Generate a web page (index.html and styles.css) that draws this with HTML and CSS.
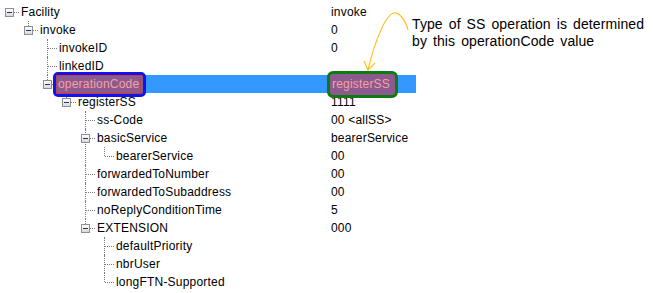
FILE: index.html
```html
<!DOCTYPE html>
<html lang="en">

<head>
    <meta charset="UTF-8">
    <meta name="viewport" content="width=device-width, initial-scale=1.0">
    <title>SS operation decode</title>
    <link rel="stylesheet" href="styles.css">
</head>

<body>
    <div class="view">
        <ul class="tree">
            <li>
                <div class="row"><span class="twig"><i class="box"></i></span><span class="label">Facility</span><span class="value">invoke</span></div>
                <ul>
                    <li>
                        <div class="row"><span class="twig"><i class="box"></i></span><span class="label">invoke</span><span class="value">0</span></div>
                        <ul>
                            <li><div class="row"><span class="twig"></span><span class="label">invokeID</span><span class="value">0</span></div></li>
                            <li><div class="row"><span class="twig"></span><span class="label">linkedID</span><span class="value"></span></div></li>
                            <li>
                                <div class="row selected"><span class="twig"><i class="box"></i></span><span class="label"><span class="mark blue"><span class="focus">operationCode</span></span></span><span class="value"><span class="mark green">registerSS</span></span></div>
                                <ul>
                                    <li>
                                        <div class="row"><span class="twig"><i class="box"></i></span><span class="label">registerSS</span><span class="value">1111</span></div>
                                        <ul>
                                            <li><div class="row"><span class="twig"></span><span class="label">ss-Code</span><span class="value">00 &lt;allSS&gt;</span></div></li>
                                            <li>
                                                <div class="row"><span class="twig"><i class="box"></i></span><span class="label">basicService</span><span class="value">bearerService</span></div>
                                                <ul>
                                                    <li><div class="row"><span class="twig"></span><span class="label">bearerService</span><span class="value">00</span></div></li>
                                                </ul>
                                            </li>
                                            <li><div class="row"><span class="twig"></span><span class="label">forwardedToNumber</span><span class="value">00</span></div></li>
                                            <li><div class="row"><span class="twig"></span><span class="label">forwardedToSubaddress</span><span class="value">00</span></div></li>
                                            <li><div class="row"><span class="twig"></span><span class="label">noReplyConditionTime</span><span class="value">5</span></div></li>
                                            <li>
                                                <div class="row"><span class="twig"><i class="box"></i></span><span class="label">EXTENSION</span><span class="value">000</span></div>
                                                <ul>
                                                    <li><div class="row"><span class="twig"></span><span class="label">defaultPriority</span><span class="value"></span></div></li>
                                                    <li><div class="row"><span class="twig"></span><span class="label">nbrUser</span><span class="value"></span></div></li>
                                                    <li><div class="row"><span class="twig"></span><span class="label">longFTN-Supported</span><span class="value"></span></div></li>
                                                </ul>
                                            </li>
                                        </ul>
                                    </li>
                                </ul>
                            </li>
                        </ul>
                    </li>
                </ul>
            </li>
        </ul>

        <!-- callout -->
        <p class="note">Type of SS operation is determined<br>by this operationCode value</p>
        <svg class="arrow" width="653" height="293" viewBox="0 0 653 293">
            <path d="M408,30 C405,19 399,12 394,13 C386,14 375,40 368,70" />
            <path d="M364,61 L368,70 L375,63" />
        </svg>
    </div>
</body>

</html>
```

FILE: styles.css
```css
* {
    margin: 0;
    padding: 0;
    box-sizing: border-box;
}

body {
    background: #fff;
    font-family: "Liberation Sans", Arial, sans-serif;
    font-size: 12px;
    letter-spacing: 0.2px;
    color: #000;
}

.view {
    position: relative;
    width: 653px;
    height: 293px;
    overflow: hidden;
}

/* tree list */
.tree {
    width: 416px;
    padding-top: 3px;
    list-style: none;
}

.tree ul {
    list-style: none;
    padding-left: 19px;
}

.tree li {
    position: relative;
}

.tree ul > li::before {
    content: "";
    position: absolute;
    left: 9px;
    top: 0;
    bottom: 0;
    border-left: 1px dotted #7a7a7a;
}

.tree ul > li:last-child::before {
    bottom: auto;
    height: 9px;
}

.row {
    display: flex;
    height: 18px;
}

.twig {
    position: relative;
    flex: none;
    width: 19px;
    height: 18px;
}

.twig::after {
    content: "";
    position: absolute;
    left: 10px;
    right: 0;
    top: 9px;
    border-top: 1px dotted #7a7a7a;
}

.box {
    position: absolute;
    left: 5px;
    top: 5px;
    width: 9px;
    height: 9px;
    border: 1px solid #8e8f8f;
    background: linear-gradient(#fff, #d8d8d8);
    z-index: 1;
}

.box::before {
    content: "";
    position: absolute;
    left: 1px;
    top: 3px;
    width: 5px;
    height: 1px;
    background: #1e3287;
}

.label {
    flex: 1;
    padding-left: 2px;
    line-height: 18px;
    white-space: nowrap;
}

.value {
    flex: none;
    width: 85px;
    line-height: 18px;
    white-space: nowrap;
}

.selected .label,
.selected .value {
    background: #3399ff;
}

/* hand drawn marks */
.mark {
    position: relative;
    z-index: 2;
    display: inline-block;
    vertical-align: top;
    color: #f7a0a0;
    background: #8b5b8f;
}

.mark.blue {
    margin: -3px 0 -4px -6px;
    padding: 0 2px 0 0;
    border: 3px solid #1212f0;
    border-radius: 5px;
}

.focus {
    display: block;
    line-height: 17px;
    padding: 0 1px;
    border: 1px dotted #c8321e;
}

.mark.green {
    margin: -4px 0 -5px -4px;
    padding: 0 5px 0 2px;
    line-height: 21px;
    border: 3px solid #0f7a12;
    border-radius: 6px;
}

/* callout */
.note {
    position: absolute;
    left: 412px;
    top: 16px;
    font-size: 14px;
    line-height: 17px;
    letter-spacing: 0.1px;
    word-spacing: 2px;
    white-space: nowrap;
}

.arrow {
    position: absolute;
    left: 0;
    top: 0;
    pointer-events: none;
}

.arrow path {
    fill: none;
    stroke: #ffc21a;
    stroke-width: 1.2;
}
```
